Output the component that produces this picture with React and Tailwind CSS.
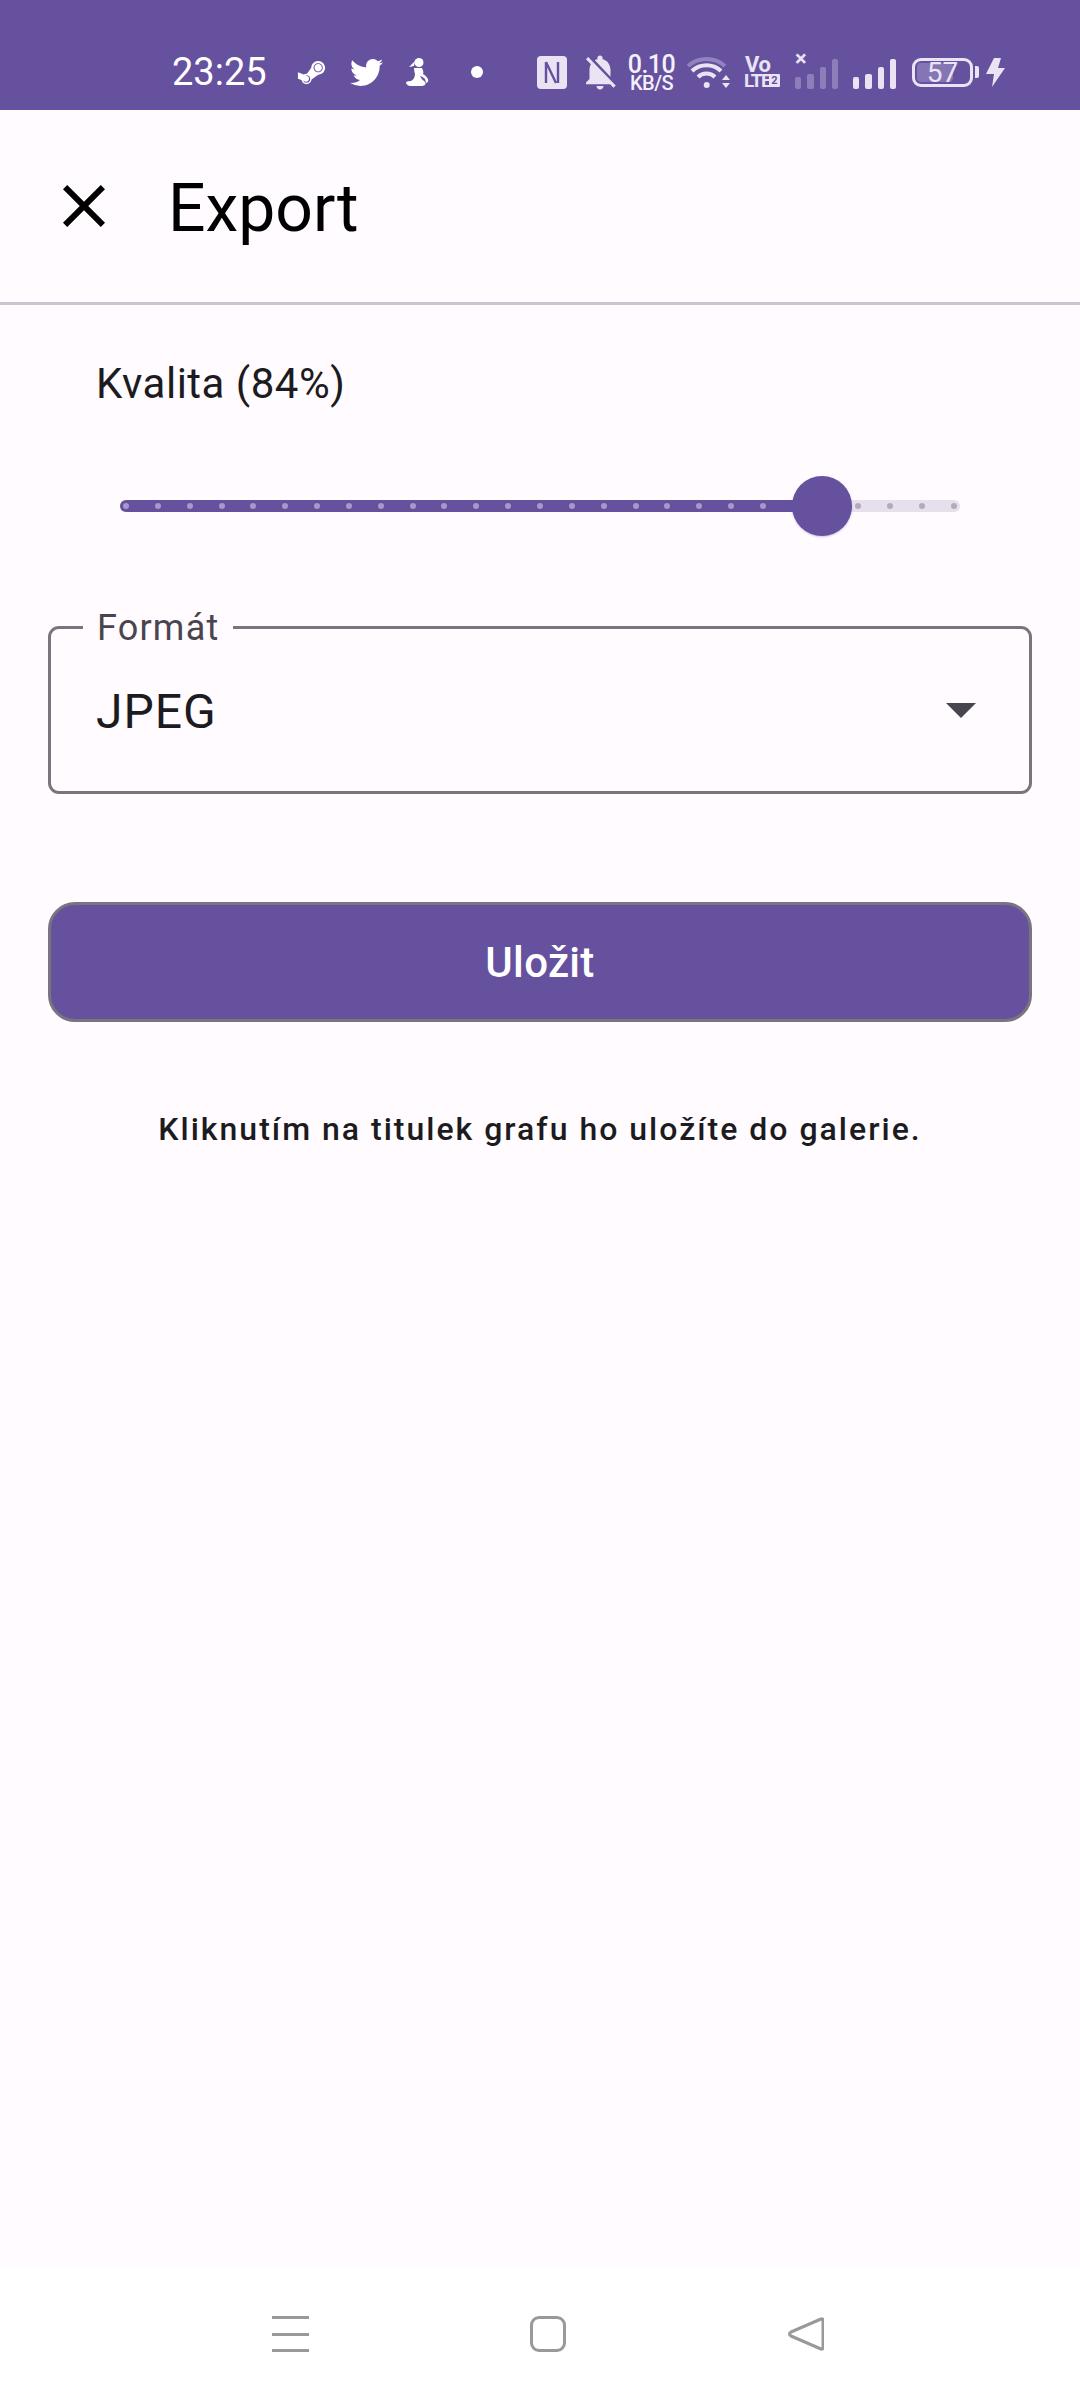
import React from "react";
import { FaSteamSymbol, FaTwitter } from "react-icons/fa";
import { MdNotificationsOff } from "react-icons/md";

const LIGHT = "#E9E3F4";
const PURPLE = "#66519F";
const dots = Array.from({ length: 27 }, (_, i) => i);

function Bars({ faded }) {
  const heights = [12, 15, 22, 30];
  return (
    <div className={`flex items-end gap-[6px] h-[33px] w-[43px] ${faded ? "opacity-30" : ""}`}>
      {heights.map((h, i) => (
        <div key={i} className="w-[6.5px] rounded-[2px] bg-[#E9E3F4]" style={{ height: h }} />
      ))}
    </div>
  );
}

function StatusBar() {
  return (
    <div className="h-[110px] shrink-0 bg-[#66519F] pt-[34px] pl-[172px] flex items-center text-white">
      <span className="w-[96px] shrink-0 text-[38px] leading-none">23:25</span>
      <FaSteamSymbol className="ml-[28px] shrink-0" size={31} color="#fff" />
      <FaTwitter className="ml-[23px] shrink-0" size={33} color="#fff" />
      <svg className="ml-[23px] shrink-0" width="24" height="28" viewBox="0 0 24 28" fill="#fff">
        <circle cx="13" cy="4.5" r="4.5" />
        <path d="M9 3 L3 9 L8 8z" />
        <path d="M8 10 H16 Q18 14 17 16 Q21 18 22 21 Q23 24 20 25 L19 21 Q16 18 14 18 Q15 21 19 24 Q21 27 16 28 H4 Q0 27 0 24 Q2 23 5 23 Q9 21 9 16 Q8 13 8 10z" />
      </svg>
      <div className="ml-[41px] w-[12px] h-[12px] rounded-full bg-white shrink-0" />
      <svg className="ml-[54px] shrink-0" width="30" height="33" viewBox="0 0 30 33">
        <rect width="30" height="33" rx="4" fill={LIGHT} />
        <path d="M9 6V27M9 6l10 21M21 6V27" fill="none" stroke={PURPLE} strokeWidth="2.4" />
      </svg>
      <div className="ml-[18px] w-[30px] flex justify-center shrink-0">
        <MdNotificationsOff className="shrink-0" size={42} color={LIGHT} />
      </div>
      <div className="ml-[14px] w-[45px] shrink-0 flex flex-col items-center font-medium text-[#F4F0FA]">
        <span className="text-[25px] leading-[20px] tracking-[-0.5px]">0.10</span>
        <span className="text-[20px] leading-[14px] mt-[1px] tracking-[-0.5px]">KB/S</span>
      </div>
      <svg className="ml-[13px] shrink-0" width="43" height="33" viewBox="0 0 43 33" fill="none" stroke={LIGHT} strokeWidth="4">
        <path d="M1 10 A28 28 0 0 1 38 10" opacity="0.35" />
        <path d="M5 15 A21 21 0 0 1 34 15" />
        <path d="M11 21 A12 12 0 0 1 28 21" />
        <circle cx="19.7" cy="29" r="3" fill={LIGHT} stroke="none" />
        <path d="M35 24 L39 19 L43 24z M35 27 L43 27 L39 32z" fill={LIGHT} stroke="none" />
      </svg>
      <div className="ml-[14px] w-[36px] shrink-0 flex flex-col text-[#E9E3F4] font-bold">
        <span className="text-[22px] leading-[16px] tracking-[-0.5px] ml-[1px]">Vo</span>
        <div className="flex items-center mt-[1px]">
          <span className="text-[19px] leading-[14px] tracking-[-1.5px] w-[25px]">LTE</span>
          <span className="w-[11px] h-[13px] bg-[#E9E3F4] text-[#66519F] text-[11px] leading-[13px] text-center rounded-[1px]">2</span>
        </div>
      </div>
      <div className="ml-[15px] shrink-0 relative">
        <Bars faded />
        <span className="absolute left-[0px] top-[-7px] text-[22px] leading-[19px] font-bold text-[#E9E3F4]">×</span>
      </div>
      <div className="ml-[15px] shrink-0 w-[42px]">
        <Bars />
      </div>
      <div className="ml-[17px] shrink-0 flex items-center">
        <div className="relative w-[61px] h-[29px] rounded-[9px] border-[3px] border-[#E9E3F4] flex items-center justify-center">
          <div className="absolute left-[2px] top-[2px] bottom-[2px] w-[36px] rounded-[4px] bg-[#E9E3F4] opacity-25" />
          <span className="relative text-[28px] leading-[23px] text-[#E9E3F4]">57</span>
        </div>
        <div className="ml-[2px] w-[4px] h-[12px] rounded-r-[2px] bg-[#E9E3F4]" />
      </div>
      <svg className="ml-[7px] shrink-0" width="19" height="29" viewBox="0 0 19 29" fill={LIGHT}>
        <path d="M8 0 H15 L12 10 H19 L6 29 L8 16 H0z" />
      </svg>
    </div>
  );
}

function Slider() {
  return (
    <div className="relative ml-[120px] w-[840px] h-[60px] mt-[67px] flex items-center">
      <div className="relative w-full h-[12px] rounded-full bg-[#E7E0EC] overflow-hidden">
        <div className="absolute left-0 top-0 bottom-0 w-[702px] bg-[#66519F]" />
        <div className="relative h-full px-[3px] flex items-center justify-between">
          {dots.map((i) => (
            <div
              key={i}
              className={`w-[6px] h-[6px] rounded-full ${i < 22 ? "bg-[#A897CB]" : "bg-[#B2ABB9]"}`}
            />
          ))}
        </div>
      </div>
      <div className="absolute left-[672px] top-0 w-[60px] h-[60px] rounded-full bg-[#66519F] shadow-[0_1px_2px_rgba(102,81,159,0.3)]" />
    </div>
  );
}

export default function App() {
  return (
    <div className="w-[1080px] h-[2400px] bg-[#FFFBFE] flex flex-col font-['Roboto',sans-serif] overflow-hidden">
      <StatusBar />
      <header className="h-[195px] shrink-0 border-b-[3px] border-[#CAC4D0] flex items-center pl-[48px]">
        <svg width="72" height="72" viewBox="0 0 24 24" fill="#000" className="shrink-0">
          <path d="M19 6.41L17.59 5 12 10.59 6.41 5 5 6.41 10.59 12 5 17.59 6.41 19 12 13.41 17.59 19 19 17.59 13.41 12z" />
        </svg>
        <h1 className="ml-[48px] mt-[5px] text-[66px] leading-none text-black font-normal">Export</h1>
      </header>

      <main className="flex-1 flex flex-col">
        <p className="pl-[96px] mt-[54px] text-[42px] leading-[50px] tracking-[0.5px] text-[#1C1B1F]">Kvalita (84%)</p>
        <Slider />
        <div className="relative mx-[48px] mt-[90px] h-[168px] rounded-[11px] border-[3px] border-[#79747E] flex items-center justify-between pl-[45px] pr-[53px]">
          <span className="absolute left-[32px] top-[-21px] px-[14px] bg-[#FFFBFE] text-[36px] leading-[40px] tracking-[1.2px] text-[#49454F]">Formát</span>
          <span className="text-[48px] leading-[56px] tracking-[1px] text-[#1C1B1F] mt-[4px]">JPEG</span>
          <svg width="30" height="15" viewBox="0 0 30 15" fill="#49454F" className="shrink-0">
            <path d="M0 0 H30 L15 15z" />
          </svg>
        </div>
        <button className="mx-[48px] mt-[108px] h-[120px] rounded-[27px] border-[3px] border-[#79747E] bg-[#66519F] text-white text-[42px] font-medium tracking-[0.3px]">
          Uložit
        </button>
        <p className="mt-[85px] text-center text-[32px] leading-[44px] font-medium tracking-[2px] text-[#1C1B1F]">
          Kliknutím na titulek grafu ho uložíte do galerie.
        </p>
      </main>

      <nav className="h-[132px] shrink-0 bg-white pt-[48px] pl-[272px] flex items-start">
        <div className="w-[37px] h-[36px] flex flex-col justify-between">
          <div className="h-[3px] bg-[#999]" />
          <div className="h-[3px] bg-[#999]" />
          <div className="h-[3px] bg-[#999]" />
        </div>
        <div className="ml-[221px] w-[36px] h-[36px] rounded-[9px] border-[3px] border-[#999]" />
        <svg className="ml-[222px] shrink-0" width="36" height="36" viewBox="0 0 36 36" fill="none" stroke="#999" strokeWidth="3" strokeLinejoin="round">
          <path d="M33 3 Q35 2 35 5 V31 Q35 34 33 33 L3 20 Q0 18 3 16z" />
        </svg>
      </nav>
    </div>
  );
}
